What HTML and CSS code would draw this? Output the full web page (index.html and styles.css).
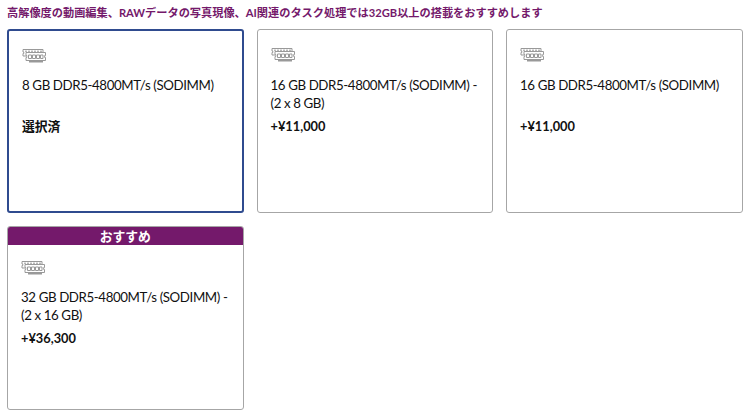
FILE: index.html
```html
<!DOCTYPE html>
<html lang="ja">
<head>
    <meta charset="UTF-8">
    <meta name="viewport" content="width=device-width, initial-scale=1.0">
    <title>メモリ</title>
    <link rel="stylesheet" href="styles.css">
</head>
<body>
    <svg class="defs" width="0" height="0" aria-hidden="true">
        <symbol id="ram" viewBox="0 0 24 16">
            <path class="ram-line" d="M1 1.500h20v3M1 1.500v2.500h.8v1.500H1v2.500h3"/>
            <path class="ram-line" d="M3 3.200h2M6 3.200h2M9 3.200h2M12 3.200h2M15 3.200h2M18 3.200h2"/>
            <path class="ram-fill" d="M4 4.500h19.500v3h-.8v2h.8v3H4v-3h.8v-2H4z"/>
            <path class="ram-line" d="M6.500 7h3v3.500h-3zM10.500 7h3v3.500h-3zM14.500 7h3v3.500h-3zM18.500 7h2.500v3.500h-2.500z"/>
            <path class="ram-base" d="M7 13h14v1.500H7z"/>
        </symbol>
    </svg>

    <p class="notice">高解像度の動画編集、RAWデータの写真現像、AI関連のタスク処理では32GB以上の搭載をおすすめします</p>

    <div class="options">
        <div class="card selected">
            <svg class="ram-icon"><use href="#ram"/></svg>
            <div class="name">8 GB DDR5-4800MT/s (SODIMM)</div>
            <div class="price">選択済</div>
        </div>
        <div class="card">
            <svg class="ram-icon"><use href="#ram"/></svg>
            <div class="name">16 GB DDR5-4800MT/s (SODIMM) - (2 x 8 GB)</div>
            <div class="price">+¥11,000</div>
        </div>
        <div class="card">
            <svg class="ram-icon"><use href="#ram"/></svg>
            <div class="name">16 GB DDR5-4800MT/s (SODIMM)</div>
            <div class="price">+¥11,000</div>
        </div>
        <div class="card recommended">
            <div class="badge">おすすめ</div>
            <svg class="ram-icon"><use href="#ram"/></svg>
            <div class="name">32 GB DDR5-4800MT/s (SODIMM) - (2 x 16 GB)</div>
            <div class="price">+¥36,300</div>
        </div>
    </div>
</body>
</html>
```
FILE: styles.css
```css
body {
    margin: 0;
    padding: 5px 8.5px 0 7px;
    font-family: 'Lato', 'Noto Sans CJK JP', sans-serif;
    font-size: 13.3px;
    line-height: 18px;
    color: #111;
    background-color: white;
}
.defs {
    position: absolute;
}
.notice {
    margin: 0 0 8px;
    height: 16px;
    font-size: 11.2px;
    line-height: 16px;
    font-weight: bold;
    color: #74196b;
}
.options {
    display: grid;
    grid-template-columns: repeat(3, 1fr);
    grid-auto-rows: 184px;
    gap: 13px;
}
.card {
    box-sizing: border-box;
    padding: 17px 13px 0;
    border: 1px solid #a6a6a6;
    border-radius: 3px;
}
.selected {
    border: 2px solid #2f4b8f;
}
.selected .ram-icon {
    margin-bottom: 12px;
}
.recommended {
    padding-top: 0;
    overflow: hidden;
}
.recommended .ram-icon {
    margin-bottom: 12px;
}
.badge {
    margin: 0 -13px 15px;
    height: 18px;
    font-size: 12.8px;
    line-height: 19px;
    font-weight: bold;
    text-align: center;
    color: white;
    background-color: #74196b;
}
.ram-icon {
    display: block;
    width: 24px;
    height: 16px;
    margin-bottom: 13px;
}
.ram-line {
    fill: none;
    stroke: #999;
    stroke-width: 1;
}
.ram-fill {
    fill: white;
    stroke: #999;
    stroke-width: 1;
}
.ram-base {
    fill: #999;
}
.name {
    height: 36px;
    margin-bottom: 5px;
    letter-spacing: -0.4px;
}
.price {
    font-size: 12.8px;
    font-weight: bold;
}
```
